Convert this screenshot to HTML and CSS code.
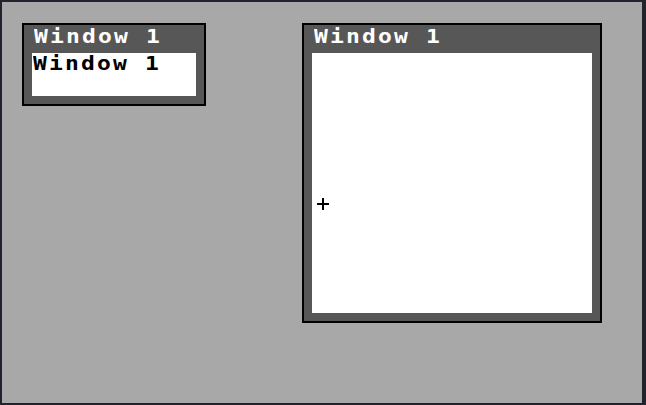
FILE: index.html
```html
<!DOCTYPE html>
<html>
<head>
<meta charset="utf-8">
<link rel="stylesheet" href="styles.css">
</head>
<body>
<div class="desktop">
  <div class="window win-small">
    <div class="title"><span class="label">Window 1</span></div>
    <div class="body body-small"><span class="label content-text">Window 1</span></div>
  </div>
  <div class="window win-large">
    <div class="title"><span class="label">Window 1</span></div>
    <div class="body body-large"></div>
  </div>
  <div class="cursor"><span class="h"></span><span class="v"></span></div>
</div>
</body>
</html>
```
FILE: styles.css
```css
html, body {
  margin: 0;
  padding: 0;
  background: #23232e;
}
.desktop {
  position: relative;
  width: 640px;
  height: 401px;
  background: #a8a8a8;
  border-style: solid;
  border-color: #23232e;
  border-width: 2px 4px 2px 2px;
  overflow: hidden;
}
.window {
  position: absolute;
  border: 2px solid #000;
  background: #575757;
  padding: 0 8px 8px 8px;
  font-family: "DejaVu Sans Mono", monospace;
  font-weight: bold;
  font-size: 23px;
  letter-spacing: 2.15px;
  -webkit-font-smoothing: none;
}
.win-small { left: 20px; top: 21px; }
.win-large { left: 300px; top: 21px; }
.label {
  display: inline-block;
  line-height: 24px;
  transform: scaleY(0.83);
  transform-origin: left top;
  white-space: nowrap;
}
.title {
  height: 28px;
  box-sizing: border-box;
  padding: 1px 0 0 2px;
  line-height: 24px;
  color: #fff;
  white-space: nowrap;
}
.body {
  background: #fff;
  color: #000;
  line-height: 24px;
  white-space: nowrap;
  overflow: hidden;
}
.body-small { width: 164px; height: 43px; }
.body-large { width: 280px; height: 260px; }
.content-text { padding-left: 1px; }
.cursor {
  position: absolute;
  left: 315px;
  top: 196px;
  width: 12px;
  height: 12px;
}
.cursor .h {
  position: absolute;
  left: 0;
  top: 5px;
  width: 12px;
  height: 2px;
  background: #000;
}
.cursor .v {
  position: absolute;
  left: 5px;
  top: 0;
  width: 2px;
  height: 12px;
  background: #000;
}
```
